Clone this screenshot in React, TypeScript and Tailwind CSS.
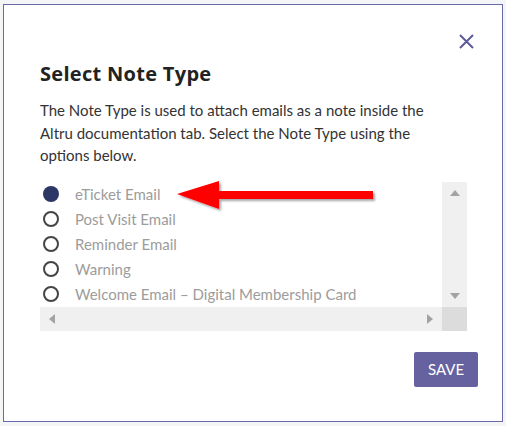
import { useState } from 'react';

const noteTypes = [
  'eTicket Email',
  'Post Visit Email',
  'Reminder Email',
  'Warning',
  'Welcome Email – Digital Membership Card',
];

export default function App() {
  const [selected, setSelected] = useState(0);

  return (
    <div className="w-[506px] h-[426px] bg-[#f3f5f6] pt-[4px] pl-[3px] overflow-hidden">
      <div className="relative w-[500px] h-[418px] border border-[#6a67ab] bg-white">
        {/* Close */}
        <button className="absolute left-[454px] top-[28px] w-[16px] h-[16px] flex items-center justify-center">
          <svg width="16" height="16" viewBox="0 0 16 16">
            <path d="M2 2L15 15M15 2L2 15" stroke="#5d5a9d" strokeWidth="2" fill="none" />
          </svg>
        </button>

        <h2 className="ml-[36px] mt-[55px] text-[20px] leading-[28px] font-bold tracking-[0.3px] text-[#222] font-['Open_Sans',sans-serif]">
          Select Note Type
        </h2>

        <p className="ml-[36px] mt-[11px] w-[400px] text-[15px] leading-[22.5px] text-[#333] font-['Lato',sans-serif]">
          The Note Type is used to attach emails as a note inside the Altru documentation tab. Select the Note Type using the
          options below.
        </p>

        {/* Options list */}
        <div className="ml-[36px] mt-[15px] w-[427px] h-[149px] grid grid-cols-[402px_25px] grid-rows-[125px_24px]">
          <div className="overflow-hidden">
            {noteTypes.map((name, i) => (
              <label
                key={name}
                className="flex items-center h-[25px] pl-[3px] cursor-pointer"
                onClick={() => setSelected(i)}
              >
                {i === selected ? (
                  <span className="w-[16px] h-[16px] rounded-full bg-[#2d3766]" />
                ) : (
                  <span className="w-[16px] h-[16px] rounded-full border-2 border-[#444]" />
                )}
                <span className="ml-[16px] whitespace-nowrap text-[15px] text-[#9c9c9c] font-['Lato',sans-serif]">
                  {name}
                </span>
              </label>
            ))}
          </div>
          <div className="bg-[#f0f0f0] flex flex-col items-center justify-between py-[8px]">
            <svg width="10" height="6" viewBox="0 0 10 6">
              <path d="M0 6L5 0L10 6Z" fill="#a3a3a3" />
            </svg>
            <svg width="10" height="6" viewBox="0 0 10 6">
              <path d="M0 0L10 0L5 6Z" fill="#a3a3a3" />
            </svg>
          </div>
          <div className="bg-[#f0f0f0] flex items-center justify-between px-[9px]">
            <svg width="6" height="10" viewBox="0 0 6 10">
              <path d="M6 0L6 10L0 5Z" fill="#a3a3a3" />
            </svg>
            <svg width="6" height="10" viewBox="0 0 6 10">
              <path d="M0 0L6 5L0 10Z" fill="#a3a3a3" />
            </svg>
          </div>
          <div className="bg-[#dcdcdc]" />
        </div>

        <div className="flex justify-end pr-[24px] mt-[21px]">
          <button className="w-[64px] h-[35px] rounded-[2px] bg-[#66629f] text-white text-[15px] font-['Lato',sans-serif]">
            SAVE
          </button>
        </div>

        {/* Red annotation arrow */}
        <svg
          className="absolute left-[168px] top-[172px] pointer-events-none"
          width="212"
          height="44"
          viewBox="0 0 212 44"
        >
          <defs>
            <filter id="shadow" x="-10%" y="-30%" width="130%" height="180%">
              <feDropShadow dx="2" dy="2" stdDeviation="1.2" floodColor="#000" floodOpacity="0.35" />
            </filter>
          </defs>
          <polygon
            points="5,17 47,4 47,14 201,14 201,22 47,22 47,32"
            fill="#ff0000"
            filter="url(#shadow)"
          />
        </svg>
      </div>
    </div>
  );
}
